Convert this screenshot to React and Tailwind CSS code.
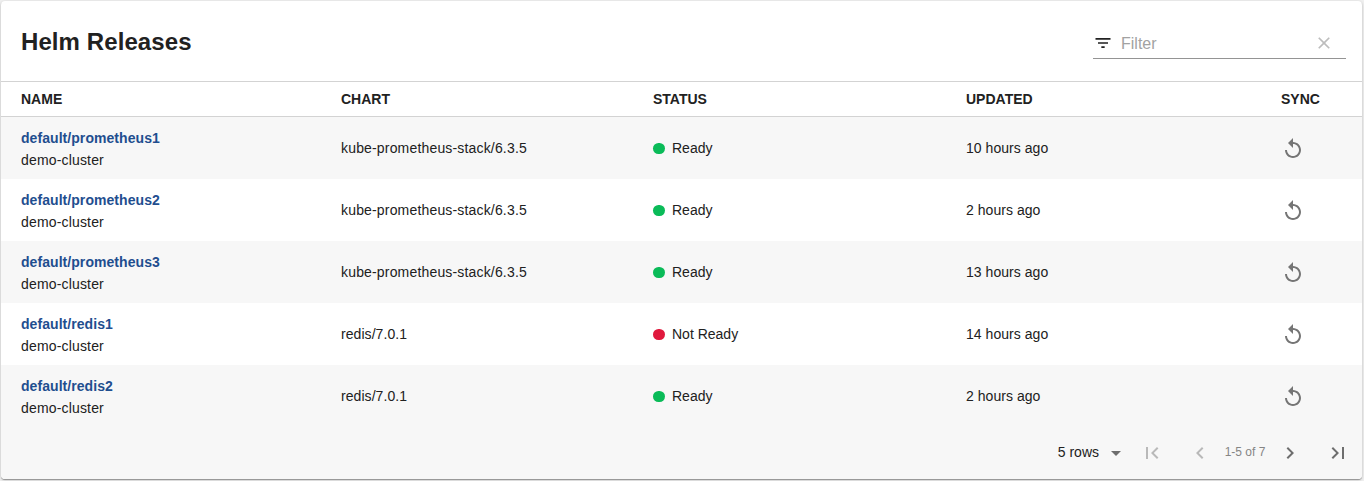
const releases = [
  { name: "default/prometheus1", chart: "kube-prometheus-stack/6.3.5", ready: true, updated: "10 hours ago" },
  { name: "default/prometheus2", chart: "kube-prometheus-stack/6.3.5", ready: true, updated: "2 hours ago" },
  { name: "default/prometheus3", chart: "kube-prometheus-stack/6.3.5", ready: true, updated: "13 hours ago" },
  { name: "default/redis1", chart: "redis/7.0.1", ready: false, updated: "14 hours ago" },
  { name: "default/redis2", chart: "redis/7.0.1", ready: true, updated: "2 hours ago" },
];

const columns = "grid grid-cols-[320px_312px_313px_315px_1fr] pl-5";

const paths = {
  filter: "M10 18h4v-2h-4v2zM3 6v2h18V6H3zm3 7h12v-2H6v2z",
  clear: "M19 6.41L17.59 5 12 10.59 6.41 5 5 6.41 10.59 12 5 17.59 6.41 19 12 13.41 17.59 19 19 17.59 13.41 12z",
  replay: "M12 5V1L7 6l5 5V7c3.31 0 6 2.69 6 6s-2.69 6-6 6-6-2.69-6-6H4c0 4.42 3.58 8 8 8s8-3.58 8-8-3.58-8-8-8z",
  dropDown: "M7 10l5 5 5-5z",
  first: "M18.41 16.59L13.82 12l4.59-4.59L17 6l-6 6 6 6zM6 6h2v12H6z",
  previous: "M15.41 7.41L14 6l-6 6 6 6 1.41-1.41L10.83 12z",
  next: "M10 6L8.59 7.41 13.17 12l-4.58 4.59L10 18l6-6z",
  last: "M5.59 7.41L10.18 12l-4.59 4.59L7 18l6-6-6-6zM16 6h2v12h-2z",
};

function Icon({ name, className }) {
  return (
    <svg viewBox="0 0 24 24" fill="currentColor" className={`shrink-0 ${className}`} aria-hidden="true">
      <path d={paths[name]} />
    </svg>
  );
}

function PageButton({ name, disabled }) {
  return (
    <button
      type="button"
      disabled={disabled}
      className={`flex size-12 items-center justify-center ${disabled ? "text-[#b9b9b9]" : "text-[#6e6e6e]"}`}
    >
      <Icon name={name} className="size-6" />
    </button>
  );
}

function Header() {
  return (
    <header className="flex h-20 items-start justify-between pl-5 pr-4">
      <h1 className="pt-[25px] text-[24px] font-bold leading-8 tracking-[0.09px]">Helm Releases</h1>
      <label className="mt-[27px] flex h-[31px] w-[253px] items-center border-b border-[#949494]">
        <Icon name="filter" className="size-5" />
        <input
          placeholder="Filter"
          className="ml-2 w-[193px] bg-transparent pt-0.5 text-base outline-none placeholder:text-[#a2a2a2]"
        />
        <Icon name="clear" className="size-5 text-[#bdbdbd]" />
      </label>
    </header>
  );
}

function Row({ release }) {
  return (
    <div className={`${columns} h-[62px] items-center odd:bg-[#f7f7f7]`}>
      <div className="pt-0.5 leading-[22px]">
        <a className="block font-bold tracking-[0.06px] text-[#1f4e8f]">{release.name}</a>
        <div className="tracking-[0.17px]">demo-cluster</div>
      </div>
      <div className={release.chart.startsWith("kube") ? "tracking-[0.17px]" : "tracking-[0.06px]"}>{release.chart}</div>
      <div className="flex items-center">
        <span className={`mr-[7px] h-[11px] w-3 rounded-full ${release.ready ? "bg-[#0abb58]" : "bg-[#e0193d]"}`} />
        {release.ready ? "Ready" : "Not Ready"}
      </div>
      <div className="tracking-[0.04px]">{release.updated}</div>
      <button type="button" className="mt-px w-6 text-[#757575]">
        <Icon name="replay" className="size-6" />
      </button>
    </div>
  );
}

export default function App() {
  return (
    <div className="h-[481px] overflow-hidden bg-[#f0f0f0] pl-px pt-px font-['Liberation_Sans',Arial,sans-serif] text-sm text-[#212121]">
      <main className="h-[478px] w-[1361px] overflow-hidden rounded-[4px] bg-white shadow-[0_1px_0_#999,0_1px_3px_rgba(0,0,0,0.25)]">
        <Header />
        <div className={`${columns} h-9 items-center border-y border-[#d3d3d3] font-bold`}>
          <div>NAME</div>
          <div>CHART</div>
          <div>STATUS</div>
          <div>UPDATED</div>
          <div>SYNC</div>
        </div>
        <div>
          {releases.map((release) => (
            <Row key={release.name} release={release} />
          ))}
        </div>
        <footer className="flex h-[52px] items-center justify-end bg-[#f7f7f7]">
          <span className="pb-0.5">5 rows</span>
          <Icon name="dropDown" className="ml-[5px] size-6 text-[#6e6e6e]" />
          <PageButton name="first" disabled />
          <PageButton name="previous" disabled />
          <span className="w-[42px] whitespace-nowrap pb-0.5 text-center text-xs text-[#858585]">1-5 of 7</span>
          <PageButton name="next" />
          <PageButton name="last" />
        </footer>
      </main>
    </div>
  );
}
